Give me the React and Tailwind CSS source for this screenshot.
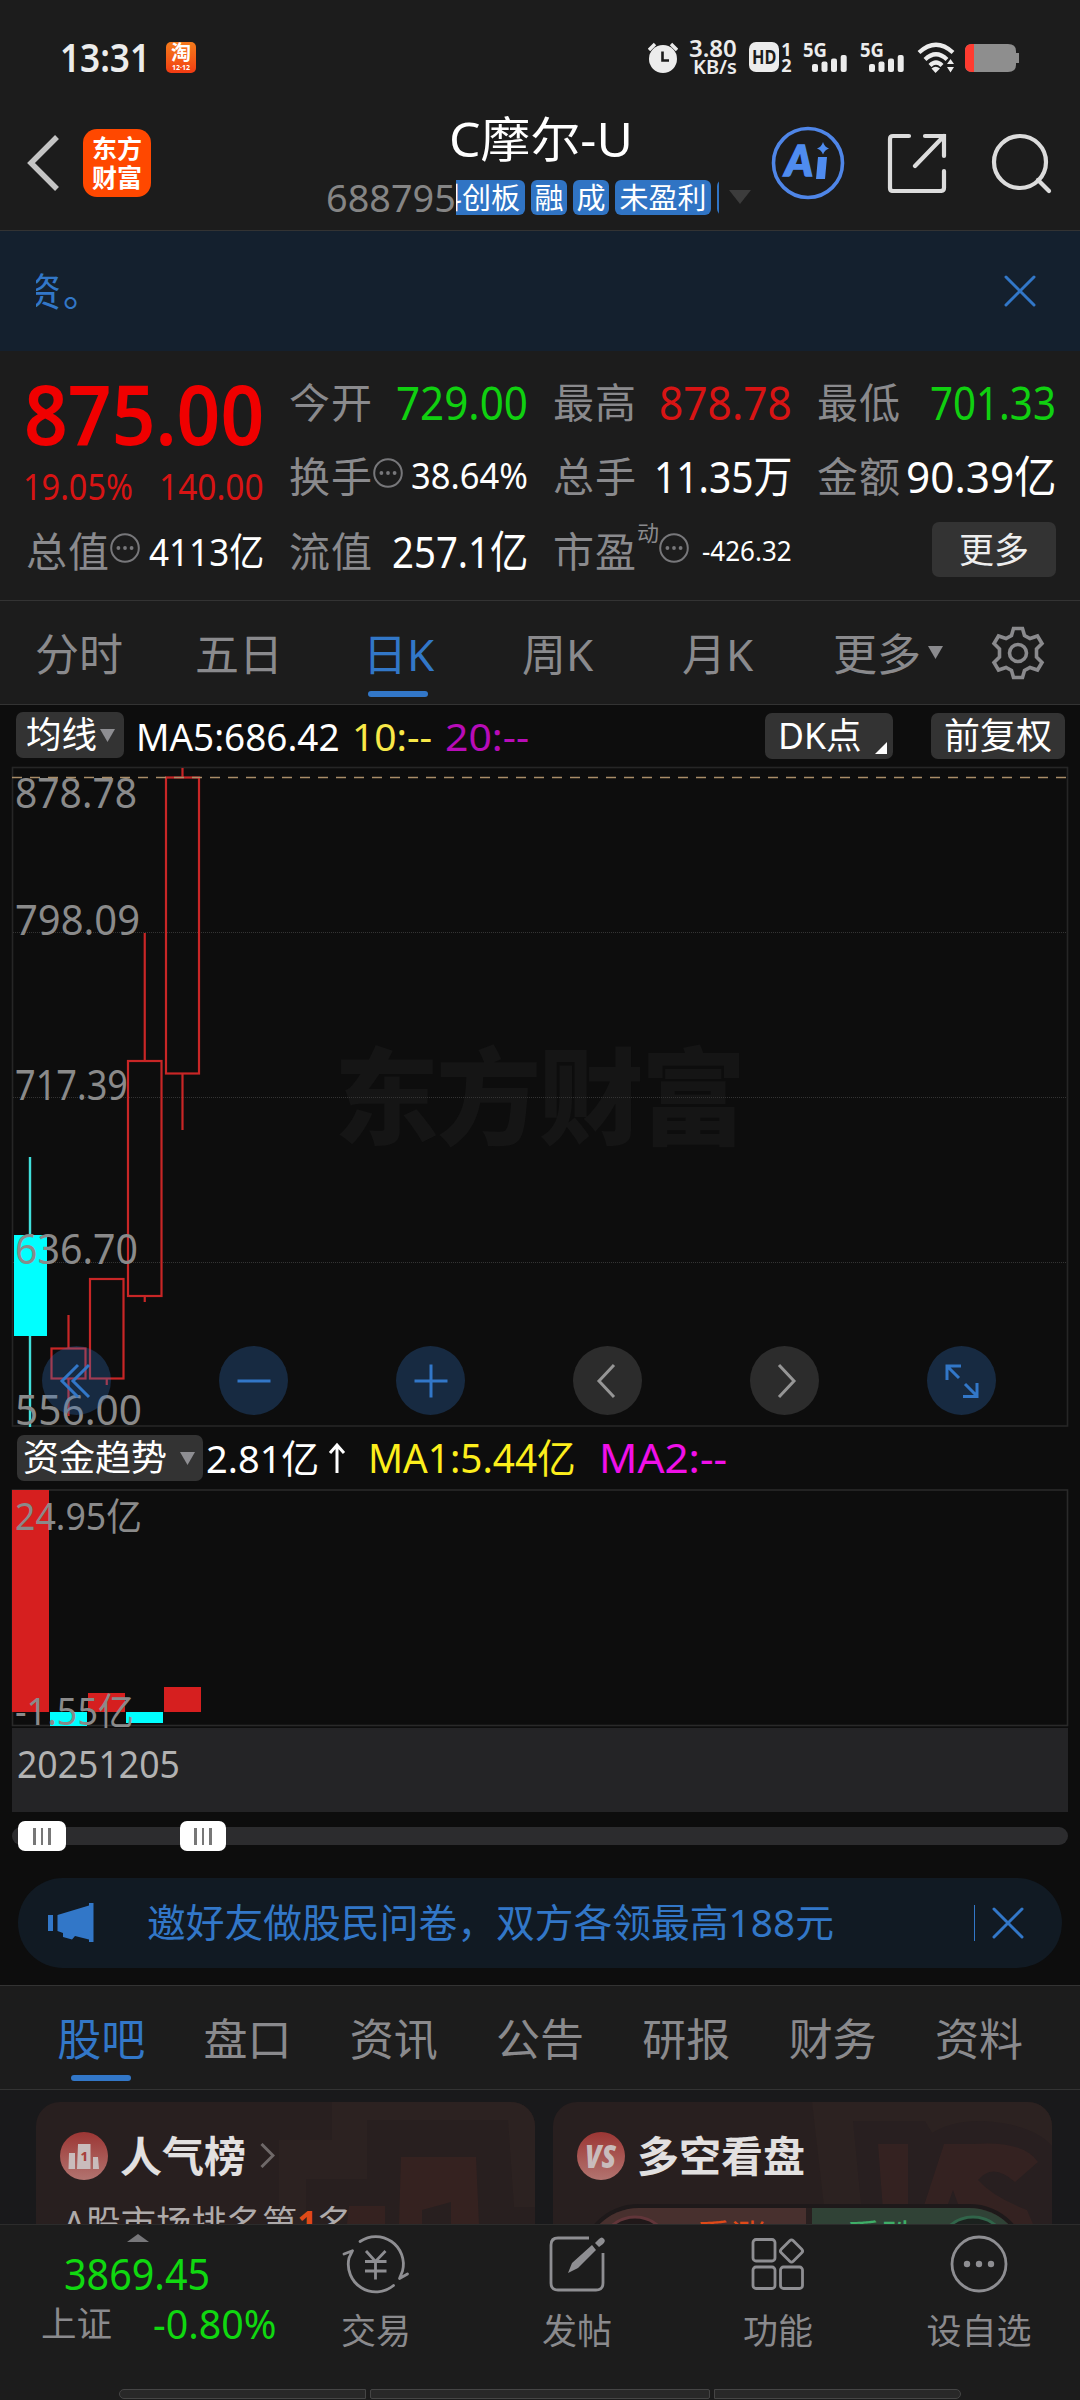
import React, { useLayoutEffect, useRef } from 'react';

/* Text condensed or widened to fill a given width. */
function Fit({ w, className = '', children }) {
  const outer = useRef(null);
  const inner = useRef(null);
  useLayoutEffect(() => {
    const natural = inner.current.offsetWidth;
    outer.current.style.width = `${w}px`;
    inner.current.style.transform = `scaleX(${w / natural})`;
  }, [w]);
  return (
    <span ref={outer} className={`inline-block shrink-0 whitespace-nowrap ${className}`}>
      <span ref={inner} className="inline-block origin-left align-top">{children}</span>
    </span>
  );
}

function Cross({ size = 34, className = '' }) {
  return (
    <svg width={size} height={size} viewBox="0 0 34 34" className={className} fill="none" stroke="#3277c8" strokeWidth="3" strokeLinecap="round">
      <path d="M3 3 31 31M31 3 3 31" />
    </svg>
  );
}

function Info() {
  return (
    <svg width="30" height="30" viewBox="0 0 30 30" className="shrink-0 -translate-y-1" fill="none" stroke="#77777a" strokeWidth="2">
      <circle cx="15" cy="15" r="13.8" />
      <g fill="#77777a" stroke="none">
        <circle cx="8.4" cy="15" r="1.9" />
        <circle cx="15" cy="15" r="1.9" />
        <circle cx="21.6" cy="15" r="1.9" />
      </g>
    </svg>
  );
}

function Signal() {
  return (
    <div className="flex h-[30px] w-[44px] flex-col items-start">
      <Fit w={24} className="text-[20px] leading-[15px] font-bold text-[#ececec]">5G</Fit>
      <svg width="36" height="17" viewBox="0 0 36 17" className="ml-[9px] -mt-[2px] shrink-0" fill="#ececec">
        <rect x="0" y="9" width="6" height="8" rx="2" />
        <rect x="9.5" y="6.5" width="6" height="10.5" rx="2" />
        <rect x="19" y="3.5" width="6" height="13.5" rx="2" />
        <rect x="28.7" y="0" width="6" height="17" rx="2" />
      </svg>
    </div>
  );
}

function StatusBar() {
  return (
    <div className="flex h-[114px] items-center pl-[60px]">
      <Fit w={90} className="-mt-[2px] text-[39px] leading-none font-semibold text-[#ececec]">13:31</Fit>
      <div className="ml-4 flex h-[31px] w-[30px] flex-col items-center overflow-hidden rounded-[5px] bg-gradient-to-b from-[#f47a1c] to-[#f23a12] text-white">
        <span className="text-[20px] leading-[22px] font-bold">淘</span>
        <span className="text-[7px] leading-[8px] font-bold">12·12</span>
      </div>
      <svg width="30" height="31" viewBox="0 0 30 31" className="ml-[452px]">
        <circle cx="15" cy="17" r="14" fill="#ececec" />
        <path d="M1 8 7 2M29 8 23 2" stroke="#ececec" strokeWidth="3.4" />
        <path d="M14.5 9.500V18.500H21" stroke="#1c1c1c" strokeWidth="2.6" fill="none" />
      </svg>
      <div className="ml-[11px] flex w-[48px] flex-col items-end font-semibold text-[#ececec]">
        <Fit w={48} className="text-[23px] leading-[18px]">3.80</Fit>
        <Fit w={44} className="text-[20px] leading-[19px]">KB/s</Fit>
      </div>
      <div className="ml-[12px] flex h-[30px] w-[30px] items-center justify-center rounded-[7px] bg-[#ececec] text-[19px] leading-none font-bold text-[#1c1c1c]">
        <Fit w={24}>HD</Fit>
      </div>
      <div className="ml-[2px] flex h-[31px] w-[11px] flex-col justify-between text-center text-[18px] leading-[15px] font-bold text-[#ececec]">
        <span>1</span>
        <span>2</span>
      </div>
      <div className="ml-[11px] flex gap-[13px]">
        <Signal />
        <Signal />
      </div>
      <svg width="38" height="31" viewBox="0 0 38 31" className="ml-[13px]" fill="none" stroke="#ececec" strokeWidth="4.200">
        <path d="M2 10.500Q19-5 36 10.500" />
        <path d="M8 17.500Q19 7 30 17.500" />
        <path d="M13 23.500Q19 17.500 25 23.500" />
        <path d="M14.500 26.500 18.500 31 23 26.500Q18.500 23 14.500 26.500Z" fill="#ececec" stroke="none" />
        <path d="M30 22 33.500 17 37 22ZM30 25 33.500 30.500 37 25Z" fill="#ececec" stroke="none" />
      </svg>
      <svg width="55" height="28" viewBox="0 0 55 28" className="mt-[2px] ml-[10px]">
        <path d="M7 0H43Q51 0 51 7V9H54V19H51V21Q51 28 43 28H7Q0 28 0 21V7Q0 0 7 0Z" fill="#8e8e8e" />
        <path d="M7 0H9V28H7Q0 28 0 21V7Q0 0 7 0Z" fill="#ff3b30" />
      </svg>
    </div>
  );
}

function Tag({ children, className = '' }) {
  return (
    <span className={`flex h-[35px] shrink-0 items-center justify-center rounded-[6px] bg-[#3074c4] text-[29px] leading-none text-white ${className}`}>
      {children}
    </span>
  );
}

function Header() {
  return (
    <div className="flex h-[116px]">
      <svg width="34" height="60" viewBox="0 0 34 60" className="mt-[19px] ml-[26px]" fill="none" stroke="#c4c4c4" strokeWidth="5.500">
        <path d="M31 4 5 30 31 56" />
      </svg>
      <div className="mt-[15px] ml-[23px] flex h-[68px] w-[68px] flex-col items-center justify-center rounded-[14px] bg-[#ff4800] text-[25px] leading-[29px] font-bold text-white">
        <span>东方</span>
        <span>财富</span>
      </div>
      <div className="ml-[176px] flex w-[425px] flex-col">
        <div className="flex h-[52px] justify-center">
          <Fit w={184} className="ml-[2px] text-[48px] leading-[50px] text-white">C摩尔-U</Fit>
        </div>
        <div className="flex h-[62px] items-center">
          <Fit w={130} className="-mt-[2px] -ml-px text-[39px] leading-none text-[#858585]">688795</Fit>
          <div className="flex w-[263px] gap-[6px] overflow-hidden">
            <Tag className="-ml-[28px] w-[97px]">科创板</Tag>
            <Tag className="w-9">融</Tag>
            <Tag className="w-9">成</Tag>
            <Tag className="w-24">未盈利</Tag>
            <Tag className="w-9" />
          </div>
          <svg width="22" height="16" viewBox="0 0 22 16" className="ml-[10px]" fill="#3c3c3c">
            <path d="M0 1H22L11 15Z" />
          </svg>
        </div>
      </div>
      <svg width="74" height="74" viewBox="0 0 74 74" className="mt-[12px] ml-[19px]">
        <circle cx="37" cy="37" r="34.500" fill="none" stroke="#4f86e8" strokeWidth="3.600" />
        <text x="14" y="50" fontSize="42" fontWeight="900" fontStyle="italic" fontFamily="Lato, sans-serif" fill="#4f8cf0" stroke="#4f8cf0" strokeWidth="1.500" textLength="28" lengthAdjust="spacingAndGlyphs">A</text>
        <path d="M47 31H56L54 53H45Z M52 16Q53.500 21 58 22.500 53.500 24 52 28.500 50.500 24 46 22.500 50.500 21 52 16Z" fill="#4f8cf0" />
      </svg>
      <svg width="60" height="60" viewBox="0 0 60 60" className="mt-[19px] ml-[42px]" fill="none" stroke="#dcdcdc" strokeWidth="4.200" strokeLinecap="round">
        <path d="M22 3H6Q3 3 3 6V55Q3 58 6 58H53Q57 58 57 55V38M38 3H57V23M57 3 28 33" />
      </svg>
      <svg width="62" height="62" viewBox="0 0 62 62" className="mt-[18px] ml-[43px]" fill="none" stroke="#dcdcdc" strokeWidth="4.200" strokeLinecap="round">
        <circle cx="30" cy="30" r="26" />
        <path d="M48 48 59 59" />
      </svg>
    </div>
  );
}

const labelCls = '-ml-[2px] text-[41px] leading-none tracking-[1px] text-[#8a8a8d] shrink-0';

function Cell({ label, info, sup, w, value, className }) {
  return (
    <div className="flex items-center">
      <span className={labelCls}>{label}</span>
      {sup && <span className="-translate-y-[20px] text-[22px] leading-none text-[#8a8a8d]">{sup}</span>}
      {info && <Info />}
      <div className="ml-auto">
        <Fit w={w} className={`leading-none ${className}`}>{value}</Fit>
      </div>
    </div>
  );
}

function Quote() {
  return (
    <div className="grid h-[249px] grid-cols-[236px_237px_237px_237px] grid-rows-[74px_75px_75px] gap-x-[27px] pt-[14px] pl-[28px]">
      <div className="row-span-2 flex flex-col">
        <div className="flex h-[96px] items-center">
          <Fit w={240} className="-ml-[4px] text-[83px] leading-none font-semibold text-[#f00000]">875.00</Fit>
        </div>
        <div className="flex h-[55px] items-center justify-between text-[36px] leading-none text-[#d81414]">
          <Fit w={110} className="-ml-[5px]">19.05%</Fit>
          <Fit w={105}>140.00</Fit>
        </div>
      </div>
      <Cell label="今开" w={132} value="729.00" className="text-[46px] text-[#10d010]" />
      <Cell label="最高" w={133} value="878.78" className="text-[46px] text-[#d81414]" />
      <Cell label="最低" w={126} value="701.33" className="text-[46px] text-[#10d010]" />
      <Cell label="换手" info w={117} value="38.64%" className="text-[36px] text-white" />
      <Cell label="总手" w={138} value="11.35万" className="text-[44px] text-white" />
      <Cell label="金额" w={150} value="90.39亿" className="text-[44px] text-white" />
      <Cell label="总值" info w={115} value="4113亿" className="text-[39px] text-white" />
      <Cell label="流值" w={136} value="257.1亿" className="text-[44px] text-white" />
      <Cell label="市盈" info sup="动" w={90} value="-426.32" className="text-[28px] text-white" />
      <div className="mt-[8px] ml-[113px] flex h-[55px] w-[124px] items-center justify-center self-start rounded-[7px] bg-[#333333] text-[35px] leading-none text-[#eeeeee]">
        更多
      </div>
    </div>
  );
}

function PeriodTabs() {
  const base = 'flex h-full items-center pt-[2px] text-[44px] leading-none';
  return (
    <div className="flex h-[105px] items-center border-y border-[#333333] text-[#8a8a8d]">
      <span className={`${base} ml-[35px] w-[160px]`}>分时</span>
      <span className={`${base} w-[168px]`}>五日</span>
      <div className="relative flex h-full w-[159px] items-center pt-[2px] text-[44px] leading-none text-[#3277c8]">
        日K
        <span className="absolute bottom-[7px] left-[5px] h-[6px] w-[60px] rounded-full bg-[#3277c8]" />
      </div>
      <span className={`${base} w-[160px]`}>周K</span>
      <span className={`${base} w-[151px]`}>月K</span>
      <span className={base}>更多</span>
      <svg width="16" height="14" viewBox="0 0 16 14" className="ml-[7px]" fill="#8a8a8d"><path d="M0 0H15L7.500 13Z" /></svg>
      <svg width="54" height="54" viewBox="-27 -27 54 54" className="ml-[47px]" fill="none" stroke="#8a8a8d" strokeWidth="3.600">
        <path d="M-4.500-24.500H4.500L6.500-17.500 12-14.500 19.500-17 24-9.500 18.500-4V4L24 9.500 19.500 17 12 14.500 6.500 17.500 4.500 24.500H-4.500L-6.500 17.500-12 14.500-19.500 17-24 9.500-18.500 4V-4L-24-9.500-19.500-17-12-14.500-6.500-17.500Z" />
        <circle r="8.500" />
      </svg>
    </div>
  );
}

function MaBar() {
  return (
    <div className="flex h-[61px] items-start pt-[7px] leading-[46px]">
      <div className="ml-4 flex h-[46px] w-[108px] items-center rounded-[7px] bg-[#333333] pl-[10px] text-[36px] text-white">
        <Fit w={71}>均线</Fit>
        <svg width="15" height="13" viewBox="0 0 15 13" className="ml-[3px]" fill="#8e8e92"><path d="M0 0H15L7.500 13Z" /></svg>
      </div>
      <Fit w={204} className="mt-px ml-[12px] text-[38px] text-white">MA5:686.42</Fit>
      <Fit w={80} className="mt-px ml-[12px] text-[38px] text-[#f8e848]">10:--</Fit>
      <Fit w={84} className="mt-px ml-[13px] text-[38px] text-[#b80cb8]">20:--</Fit>
      <div className="mt-px ml-[236px] flex h-[46px] w-[128px] items-center rounded-[7px] bg-[#333333] pl-[13px] text-[36px] text-white">
        <Fit w={84}>DK点</Fit>
        <svg width="12" height="12" viewBox="0 0 12 12" className="mt-[24px] ml-[13px]" fill="#fff"><path d="M12 0V12H0Z" /></svg>
      </div>
      <div className="mt-px ml-[38px] flex h-[46px] w-[134px] items-center justify-center rounded-[7px] bg-[#333333] text-[36px] text-white">前复权</div>
    </div>
  );
}

const priceLabels = [
  ['878.78', 808, 122],
  ['798.09', 935, 125],
  ['717.39', 1100, 113],
  ['636.70', 1264, 123],
  ['556.00', 1425, 127],
];

const candles = [
  { x: 51.5, w: 34, top: 1348.5, bottom: 1378.5, high: 1315, low: 1416 },
  { x: 90, w: 33.5, top: 1279, bottom: 1378.5, high: 1279, low: 1385 },
  { x: 128, w: 33.5, top: 1061, bottom: 1296, high: 933, low: 1302 },
  { x: 166, w: 33, top: 777.5, bottom: 1073.5, high: 768, low: 1130 },
];

function RoundButton({ gray, children }) {
  return (
    <div className={`flex h-[69px] w-[69px] items-center justify-center rounded-full ${gray ? 'bg-[#2c2c2c]' : 'bg-[#3277c8]/28'}`}>
      <svg width="40" height="40" viewBox="-20 -20 40 40" fill="none" stroke={gray ? '#969696' : '#3277c8'} strokeWidth="3">
        {children}
      </svg>
    </div>
  );
}

function CandleChart() {
  return (
    <div className="relative h-[661px]">
      <svg width="1080" height="661" viewBox="0 766 1080 661" className="block">
        <text x="334" y="1136" fontSize="105" fontWeight="900" fill="#151515" textLength="412" fontFamily="'Noto Sans CJK SC', sans-serif">东方财富</text>
        <rect x="12.500" y="767.500" width="1055" height="658.500" fill="none" stroke="#262626" strokeWidth="1.600" />
        {[932.5, 1097.5, 1262.5].map((y) => (
          <path key={y} d={`M13 ${y}H1067`} stroke="#343434" strokeDasharray="1 1" />
        ))}
        <path d="M30 1157V1427" stroke="#40e0dc" strokeWidth="2.400" />
        <rect x="14" y="1235" width="33" height="101" fill="#00ffff" />
        {candles.map((c) => (
          <g key={c.x} fill="none" stroke="#c82626" strokeWidth="2.200">
            <rect x={c.x} y={c.top} width={c.w} height={c.bottom - c.top} />
            <path d={`M${c.x + c.w / 2} ${c.high}V${c.top}M${c.x + c.w / 2} ${c.bottom}V${c.low}`} />
          </g>
        ))}
        <g fill="#8a8a8a" fontSize="41" fontFamily="'Noto Sans', sans-serif">
          {priceLabels.map(([t, y, w]) => (
            <text key={t} x="15" y={y} textLength={w} lengthAdjust="spacingAndGlyphs">{t}</text>
          ))}
        </g>
        <path d="M12 777.500H1067" stroke="#a98d68" strokeWidth="1.400" strokeDasharray="10 8" />
      </svg>
      <div className="absolute top-[580px] left-[42px] flex gap-[108px]">
        <RoundButton><path d="M1-16-15 0 1 16M12-16-4 0 12 16" /></RoundButton>
        <RoundButton><path d="M-16.500 0H16.500" /></RoundButton>
        <RoundButton><path d="M-16.500 0H16.500M0-16.500V16.500" /></RoundButton>
        <RoundButton gray><path d="M6-16-9 0 6 16" /></RoundButton>
        <RoundButton gray><path d="M-6-16 9 0-6 16" /></RoundButton>
        <RoundButton><path d="M-15-1V-15H-1M-15-15-3-3M15 2V15.500H1M15 15 3 3" /></RoundButton>
      </div>
    </div>
  );
}

function FundBar() {
  return (
    <div className="flex h-[62px] items-center leading-[46px]">
      <div className="ml-[17px] flex h-[46px] w-[186px] items-center rounded-[7px] bg-[#333333] pl-[6px] text-[36px] text-white">
        <Fit w={144}>资金趋势</Fit>
        <svg width="15" height="13" viewBox="0 0 15 13" className="ml-[13px]" fill="#8e8e92"><path d="M0 0H15L7.500 13Z" /></svg>
      </div>
      <Fit w={113} className="-mt-px ml-[3px] text-[39px] text-white">2.81亿</Fit>
      <svg width="18" height="32" viewBox="0 0 18 32" className="ml-[9px]" fill="none" stroke="#fff" strokeWidth="3"><path d="M9 31V3M2 11 9 3 16 11" /></svg>
      <Fit w={208} className="-mt-px ml-[22px] text-[40px] text-[#fcee1c]">MA1:5.44亿</Fit>
      <Fit w={128} className="-mt-px ml-[23px] text-[40px] text-[#f010e8]">MA2:--</Fit>
    </div>
  );
}

function FundChart() {
  return (
    <svg width="1080" height="239" viewBox="0 1489 1080 239" className="block">
      <rect x="12.500" y="1490" width="1055" height="235.500" fill="none" stroke="#2a2a2a" strokeWidth="1.600" />
      <rect x="12" y="1490" width="37" height="222" fill="#d61f1f" />
      <rect x="50" y="1712" width="37" height="14" fill="#00ffff" />
      <rect x="88" y="1693" width="37" height="19" fill="#d61f1f" />
      <rect x="126" y="1712" width="37" height="11" fill="#00ffff" />
      <rect x="164" y="1687" width="37" height="25" fill="#d61f1f" />
      <g fill="#8a8a8a" fontSize="38" fontFamily="'Noto Sans', 'Noto Sans CJK SC', sans-serif">
        <text x="15" y="1530" textLength="127" lengthAdjust="spacingAndGlyphs">24.95亿</text>
        <text x="15" y="1725" textLength="119" lengthAdjust="spacingAndGlyphs">-1.55亿</text>
      </g>
    </svg>
  );
}

function Thumb({ className }) {
  return (
    <div className={`flex h-[30px] items-center justify-center gap-[5px] rounded-[7px] bg-white ${className}`}>
      <span className="h-[17px] w-[2.500px] bg-[#777]" />
      <span className="h-[17px] w-[2.500px] bg-[#777]" />
      <span className="h-[17px] w-[2.500px] bg-[#777]" />
    </div>
  );
}

function Timeline() {
  return (
    <div className="mx-3 h-[150px]">
      <div className="h-[84px] bg-[#242426]">
        <Fit w={163} className="ml-[5px] text-[38px] leading-[71px] text-[#b2b2b2]">20251205</Fit>
      </div>
      <div className="mt-[9px] flex h-[30px] items-center">
        <div className="flex h-[18px] w-full items-center rounded-full bg-[#2c2c2e] pl-[6px]">
          <Thumb className="w-12" />
          <Thumb className="ml-[114px] w-[46px]" />
        </div>
      </div>
    </div>
  );
}

function Promo() {
  return (
    <div className="mx-[18px] mb-[17px] flex h-[90px] items-center rounded-full bg-[#111a23]">
      <svg width="46" height="40" viewBox="0 0 46 40" className="ml-[30px]" fill="#3277c8">
        <path d="M0 12H5V28H0ZM9.500 12 41 2.500V0H45.500V39H41V36.500L27 33 24 36.500 15 34V30L9.500 28Z" />
      </svg>
      <Fit w={687} className="-mt-[2px] ml-[53px] text-[39px] leading-[46px] text-[#3277c8]">邀好友做股民问卷，双方各领最高188元</Fit>
      <span className="ml-[140px] h-9 w-px bg-[#3277c8]" />
      <Cross className="ml-[16px]" />
    </div>
  );
}

function SectionTabs() {
  const tabs = ['股吧', '盘口', '资讯', '公告', '研报', '财务', '资料'];
  return (
    <div className="flex h-[105px] border-y border-[#333333] bg-[#1c1c1c] pl-[28px]">
      {tabs.map((t, i) => (
        <div key={t} className={`relative flex w-[146.300px] items-center justify-center pt-[2px] text-[44px] leading-none ${i === 0 ? 'text-[#3277c8]' : 'text-[#8a8a8d]'}`}>
          {t}
          {i === 0 && <span className="absolute bottom-[8px] left-[43px] h-[6px] w-[60px] rounded-full bg-[#3277c8]" />}
        </div>
      ))}
    </div>
  );
}

function Cards() {
  return (
    <div className="flex h-[134px] gap-[18px] overflow-hidden bg-[#19191b] pt-[12px] pl-9">
      <div className="relative h-[300px] w-[499px] overflow-hidden rounded-[24px] bg-[#281f1f]">
        <svg width="499" height="122" viewBox="0 0 499 122" className="absolute top-0 left-0">
          <path d="M296 0V38H243V122H270V77H331V18H472L478 105H499V0Z" fill="#2c2221" />
          <path d="M365 55H440L443 122H415V100L386 108V122H363ZM313 104H349V122H311Z" fill="#352220" />
        </svg>
        <div className="relative flex h-[107px] items-center pl-[24px]">
          <svg width="48" height="48" viewBox="0 0 48 48">
            <defs>
              <linearGradient id="rank" x2="0" y2="1"><stop stopColor="#9c3634" /><stop offset="1" stopColor="#b27470" /></linearGradient>
            </defs>
            <circle cx="24" cy="24" r="24" fill="url(#rank)" />
            <path d="M9 21H15V37H8.500ZM18 12H30.500V37H17ZM33 25H38L39 37H33Z" fill="#c9bcbc" />
            <text x="20.500" y="29" fontSize="13" fontWeight="800" fill="#a8403c" fontFamily="'Noto Sans', sans-serif">1</text>
          </svg>
          <span className="ml-[12px] text-[42px] leading-none font-bold text-[#e2e0e0]">人气榜</span>
          <svg width="15" height="25" viewBox="0 0 15 25" className="ml-[14px]" fill="none" stroke="#6e6868" strokeWidth="3"><path d="M1.500 1 13 12.500 1.500 24" /></svg>
        </div>
        <div className="relative -mt-[8px] pl-[27px] text-[36px] leading-[46px] text-[#aeaaaa]">
          <Fit w={290}>A股市场排名第<b className="text-[#e04a18]">1</b>名</Fit>
        </div>
      </div>
      <div className="relative h-[300px] w-[499px] overflow-hidden rounded-[24px] bg-[#281f1f]">
        <svg width="499" height="122" viewBox="0 0 499 122" className="absolute top-0 left-0">
          <path d="M259 0H499V122H273Z" fill="#2c2221" />
          <path d="M300 19H372L379 31Q400 18 430 19 480 22 499 44V122H310Z" fill="#281f20" />
          <path d="M325 42H355V122H331ZM391 42H420Q470 38 485 60L462 80Q440 60 425 78 440 95 474 108L480 122H412L400 88 388 122H365Z" fill="#342221" />
        </svg>
        <div className="relative flex h-[107px] items-center pl-[24px]">
          <svg width="48" height="48" viewBox="0 0 48 48">
            <circle cx="24" cy="24" r="24" fill="url(#rank)" />
            <text x="8" y="36" fontSize="32" fontWeight="800" fontStyle="italic" fill="#c9bcbc" textLength="31" lengthAdjust="spacingAndGlyphs" fontFamily="'Open Sans', sans-serif">VS</text>
          </svg>
          <span className="ml-[12px] text-[42px] leading-none font-bold text-[#e2e0e0]">多空看盘</span>
        </div>
        <div className="relative -mt-[5px] ml-[26px] flex h-[120px] w-[450px] overflow-hidden rounded-full border-[4px] border-[#1e191a] text-[35px] leading-[35px]">
          <div className="w-[223px] bg-[#48302e] pt-[11px] pl-[113px] text-[#e04a18]">看涨</div>
          <div className="ml-[6px] flex-1 bg-[#304236] pt-[11px] pl-[34px] text-[#3fae68]">看跌</div>
          <svg width="442" height="60" viewBox="0 0 442 60" className="absolute top-0 left-0">
            <circle cx="52" cy="44" r="35" fill="#201819" stroke="#62363a" strokeWidth="3" />
            <circle cx="390" cy="44" r="35" fill="#1b211e" stroke="#31654a" strokeWidth="3" />
          </svg>
        </div>
      </div>
    </div>
  );
}

function NavItem({ label, className, children }) {
  return (
    <div className={`flex flex-col items-center ${className}`}>
      <svg width="70" height="60" viewBox="-35 -30 70 60" className="mt-[9px]" fill="none" stroke="#8e8e92" strokeWidth="2.800">
        {children}
      </svg>
      <span className="mt-[18px] text-[35px] leading-[38px] text-[#8a8a8d]">{label}</span>
    </div>
  );
}

function BottomBar() {
  return (
    <div className="flex h-[176px] flex-col border-t border-[#2c2c2c] bg-[#1c1c1c]">
      <div className="flex h-[164px]">
        <div className="w-[309px]">
          <svg width="22" height="8" viewBox="0 0 22 8" className="mt-[9px] ml-[127px] block" fill="#77777a"><path d="M0 8 11 0 22 8Z" /></svg>
          <Fit w={146} className="mt-[9px] ml-[64px] text-[43px] leading-[46px] text-[#10d810]">3869.45</Fit>
          <div className="mt-[2px] flex items-center leading-[50px]">
            <Fit w={71} className="ml-[41px] text-[35px] text-[#8a8a8d]">上证</Fit>
            <Fit w={123} className="ml-[41px] text-[40px] text-[#10d810]">-0.80%</Fit>
          </div>
        </div>
        <NavItem label="交易" className="w-[134px]">
          <g strokeLinecap="round" strokeLinejoin="round">
            <path d="M-16-22.500A27.600 27.600 0 0 1 26.500 7L23.500 14.500 31.500 10" />
            <path d="M17.500 21.500A27.600 27.600 0 0 1-27-6L-23.500-13.300-32-10" />
          </g>
          <path d="M-10-13-.5-2.500 9.500-13M-.5-2.500V15.500M-11-2.500H10.500M-11 7H10.500" />
        </NavItem>
        <NavItem label="发帖" className="ml-[67px] w-[134px]">
          <path d="M12-26H-19Q-26-26-26-19V19Q-26 26-19 26H19Q26 26 26 19V-11" />
          <path d="M-9 9-5-1 15-19 19-14 1 4Z M18-21 22-25Q25-28 27-25 29-23 26-20L22-17Z" fill="#8e8e92" stroke="none" />
        </NavItem>
        <NavItem label="功能" className="ml-[67px] w-[134px]">
          <rect x="-25" y="-24.500" width="22" height="21.500" rx="3" />
          <rect x="-25" y="3" width="22" height="21.500" rx="3" />
          <rect x="2.500" y="3" width="22" height="21.500" rx="3" />
          <rect x="5" y="-21.500" width="17" height="17" rx="2.500" transform="rotate(45 13.500 -13)" />
        </NavItem>
        <NavItem label="设自选" className="ml-[67px] w-[134px]">
          <circle r="27" />
          <g fill="#8e8e92" stroke="none"><circle cx="-12" r="3.200" /><circle r="3.200" /><circle cx="12" r="3.200" /></g>
        </NavItem>
      </div>
      <div className="ml-[119px] flex gap-[4px]">
        <span className="h-[10px] w-[247px] rounded-l-full rounded-r-[2px] border border-[#454545] bg-[#282828]" />
        <span className="h-[10px] w-[340px] rounded-[2px] border border-[#454545] bg-[#282828]" />
        <span className="h-[10px] w-[247px] rounded-l-[2px] rounded-r-full border border-[#454545] bg-[#282828]" />
      </div>
    </div>
  );
}

export default function App() {
  return (
    <div className="h-[2400px] w-[1080px] overflow-hidden bg-[#0d0d0d] font-['Noto_Sans','Noto_Sans_CJK_SC',sans-serif]">
      <div className="bg-[#1c1c1c]">
        <StatusBar />
        <Header />
        <div className="flex h-[121px] items-center justify-between border-t border-[#333333] bg-[#14202e] pr-[43px] pl-9">
          <div className="flex w-[60px] overflow-hidden">
            <span className="-ml-[14px] text-[39px] leading-[60px] tracking-[2px] text-[#3277c8]">资。</span>
          </div>
          <Cross />
        </div>
        <Quote />
        <PeriodTabs />
      </div>
      <MaBar />
      <CandleChart />
      <FundBar />
      <FundChart />
      <Timeline />
      <Promo />
      <SectionTabs />
      <Cards />
      <BottomBar />
    </div>
  );
}
